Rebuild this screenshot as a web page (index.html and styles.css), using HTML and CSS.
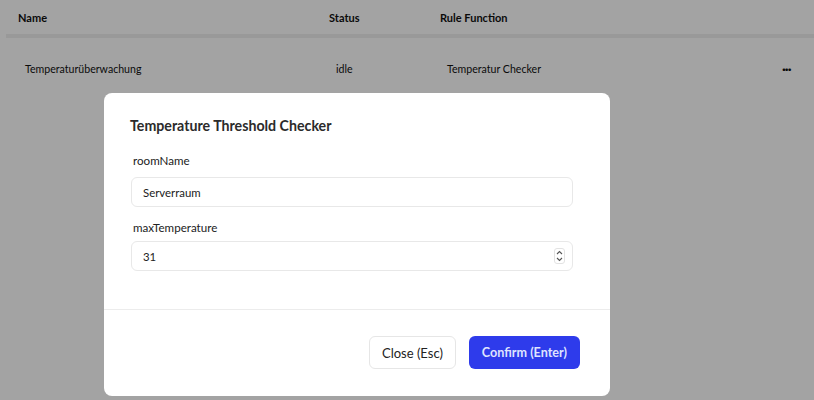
FILE: index.html
```html
<!DOCTYPE html>
<html>
<head>
<meta charset="utf-8">
<link rel="stylesheet" href="styles.css">
</head>
<body>
<div class="page">
  <div class="table">
    <div class="thead">
      <div class="th c-name">Name</div>
      <div class="th c-status">Status</div>
      <div class="th c-func">Rule Function</div>
    </div>
    <div class="trow">
      <div class="td c-name">Temperaturüberwachung</div>
      <div class="td c-status">idle</div>
      <div class="td c-func">Temperatur Checker</div>
      <div class="td c-act"><span class="dots">···</span></div>
    </div>
  </div>
</div>
<div class="overlay"></div>
<div class="modal">
  <div class="modal-body">
    <div class="modal-title">Temperature Threshold Checker</div>
    <div class="field f1">
      <div class="label">roomName</div>
      <div class="input">Serverraum</div>
    </div>
    <div class="field f2">
      <div class="label">maxTemperature</div>
      <div class="input num">
        <span>31</span>
        <span class="spin">
          <svg width="11" height="16" viewBox="0 0 11 16">
            <rect x="0.5" y="0.5" width="10" height="15" rx="2.5" fill="#fff" stroke="#e2e2e2"/>
            <path d="M3 6 L5.5 3.6 L8 6" fill="none" stroke="#555" stroke-width="1.1"/>
            <path d="M3 10 L5.5 12.4 L8 10" fill="none" stroke="#555" stroke-width="1.1"/>
          </svg>
        </span>
      </div>
    </div>
  </div>
  <div class="modal-footer">
    <button class="btn btn-close">Close (Esc)</button>
    <button class="btn btn-confirm">Confirm (Enter)</button>
  </div>
</div>
</body>
</html>
```
FILE: styles.css
```css
* { box-sizing: border-box; }
html, body {
  margin: 0;
  padding: 0;
  width: 814px;
  height: 400px;
  overflow: hidden;
  background: #ffffff;
  font-family: "Lato", "Noto Sans", sans-serif;
  color: #111;
}
.page {
  padding: 0 0 0 6px;
}
.table {
  width: 808px;
}
.thead {
  display: flex;
  height: 38px;
  align-items: center;
  border-bottom: 4px solid #f0f0f0;
}
.th {
  font-size: 11px;
  font-weight: 700;
  padding-left: 12px;
  color: #111;
}
.trow {
  display: flex;
  height: 61px;
  align-items: center;
}
.td {
  font-size: 10.6px;
  padding-left: 19px;
  color: #111;
}
.c-name { width: 311px; }
.c-status { width: 111px; }
.c-func { width: 330px; }
.c-act { flex: 1; padding-left: 24px; }
.dots { font-weight: 700; font-size: 14px; letter-spacing: -1px; }
.overlay {
  position: fixed;
  inset: 0;
  background: rgba(0, 0, 0, 0.36);
}
.modal {
  position: fixed;
  left: 104px;
  top: 93px;
  width: 506px;
  height: 303px;
  background: #fff;
  border-radius: 8px;
  display: flex;
  flex-direction: column;
}
.modal-body {
  padding: 23px 37px 0 26px;
  height: 217px;
  border-bottom: 1px solid #ececec;
}
.modal-title {
  font-size: 14.2px;
  font-weight: 700;
  line-height: 20px;
  color: #2b2b2b;
}
.label {
  font-size: 11.6px;
  line-height: 18px;
  padding-left: 3px;
  color: #222;
}
.f1 { margin-top: 16px; }
.f1 .label { margin-bottom: 7px; }
.f2 { margin-top: 12px; }
.f2 .label { margin-bottom: 4px; }
.input {
  height: 30px;
  margin-left: 1px;
  border: 1px solid #e8e8e8;
  border-radius: 6px;
  padding: 0 11px;
  display: flex;
  align-items: center;
  font-size: 11.4px;
  color: #222;
}
.input.num {
  justify-content: space-between;
  padding-right: 7px;
}
.spin { display: flex; }
.modal-footer {
  flex: 1;
  display: flex;
  justify-content: flex-end;
  align-items: flex-start;
  gap: 13px;
  padding: 26px 30px 0 0;
}
.btn {
  height: 33px;
  border-radius: 6px;
  font-family: inherit;
  font-size: 13px;
  padding: 0 12px;
  white-space: nowrap;
  cursor: pointer;
}
.btn-close {
  background: #fff;
  border: 1px solid #e6e6e6;
  color: #222;
}
.btn-confirm {
  background: #2e3beb;
  border: none;
  color: #dfe3ff;
  font-weight: 700;
  font-size: 12.6px;
  padding: 0 13px;
}
```
